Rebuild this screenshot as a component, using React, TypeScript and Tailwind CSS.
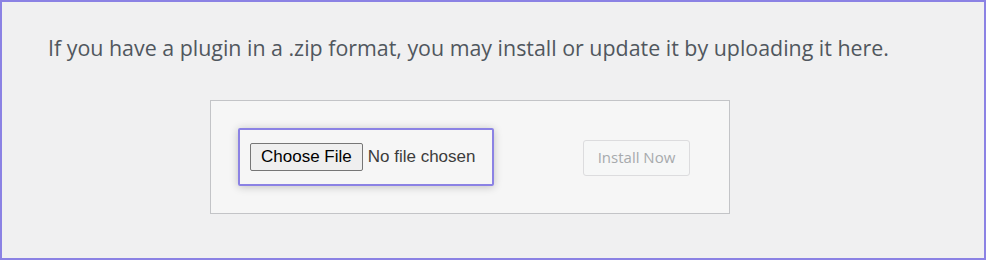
export default function App() {
  return (
    <div className="h-[260px] w-[986px] border-2 border-[#8b82e4] bg-[#f0f0f1]" style={{ fontFamily: '"Open Sans", sans-serif' }}>
      <p className="ml-[46px] mt-[30px] text-[21.4px] leading-[31px] text-[#50575e]">
        If you have a plugin in a .zip format, you may install or update it by uploading it here.
      </p>
      <div className="ml-[208px] mt-[37px] flex h-[114px] w-[520px] items-center border border-[#c3c4c7] bg-[#f6f6f6]">
        <div className="ml-[27px] flex h-[58px] w-[256px] items-center rounded-[2px] border-2 border-[#8b82e4] shadow-[0_1px_8px_rgba(0,0,0,0.22)]">
          <button
            className="ml-[10px] h-[28px] rounded-[2px] border border-[#767676] bg-[#efefef] px-[10px] text-[17px] text-black"
            style={{ fontFamily: '"Liberation Sans", Arial, sans-serif' }}
          >
            Choose File
          </button>
          <span className="ml-[5px] text-[17px] text-[#3c3c3c]" style={{ fontFamily: '"Liberation Sans", Arial, sans-serif' }}>
            No file chosen
          </span>
        </div>
        <button className="ml-[89px] mt-[1px] h-[36px] w-[107px] rounded-[3px] border border-[#dcdcde] bg-[#f6f7f7] text-[15px] text-[#a7aaad]">
          Install Now
        </button>
      </div>
    </div>
  );
}
